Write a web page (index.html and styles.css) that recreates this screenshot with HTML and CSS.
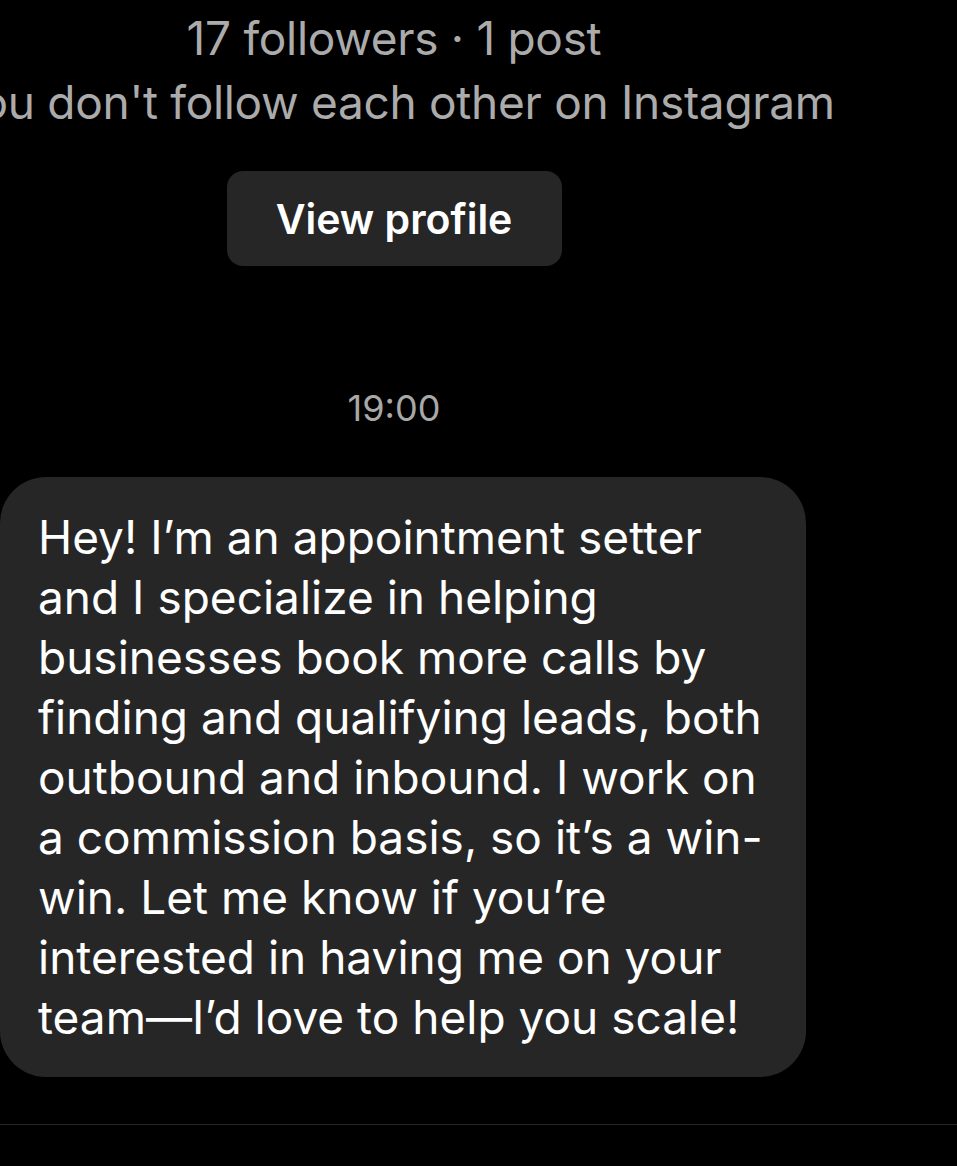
FILE: index.html
```html
<!DOCTYPE html>
<html lang="en">
<head>
  <meta charset="UTF-8">
  <title>Chat</title>
  <link rel="stylesheet" href="styles.css">
</head>
<body>

  <div class="thread">
    <div class="profile">
      <div class="profile-line">17 followers · 1 post</div>
      <div class="profile-line">You don't follow each other on Instagram</div>
      <button class="view-btn">View profile</button>
    </div>

    <div class="time">19:00</div>

    <div class="bubble">
      Hey! I’m an appointment setter<br>
      and I specialize in helping<br>
      businesses book more calls by<br>
      finding and qualifying leads, both<br>
      outbound and inbound. I work on<br>
      a commission basis, so it’s a win-<br>
      win. Let me know if you’re<br>
      interested in having me on your<br>
      team—I’d love to help you scale!
    </div>
  </div>

  <div class="divider"></div>

</body>
</html>
```

FILE: styles.css
```css
body {
  margin: 0;
  background: #000;
  color: #fff;
  font-family: 'Inter', 'Liberation Sans', sans-serif;
  overflow: hidden;
}

.thread {
  width: 788px;
}

.profile {
  display: flex;
  flex-direction: column;
  align-items: center;
  padding-top: 6px;
}

.profile-line {
  font-size: 46px;
  line-height: 64px;
  color: #ababab;
  white-space: nowrap;
  letter-spacing: -0.3px;
}

.view-btn {
  margin-top: 37px;
  width: 335px;
  height: 95px;
  border: none;
  border-radius: 16px;
  background: #262626;
  color: #fff;
  font-family: inherit;
  font-size: 41px;
  font-weight: 600;
}

.time {
  margin-top: 122px;
  text-align: center;
  font-size: 36px;
  line-height: 40px;
  color: #a8a8a8;
}

.bubble {
  margin-top: 49px;
  width: 806px;
  box-sizing: border-box;
  padding: 30px 20px 30px 38px;
  border-radius: 46px;
  background: #262626;
  font-size: 46px;
  line-height: 60px;
  white-space: nowrap;
}

.divider {
  margin-top: 47px;
  height: 1px;
  background: #262626;
}
```
